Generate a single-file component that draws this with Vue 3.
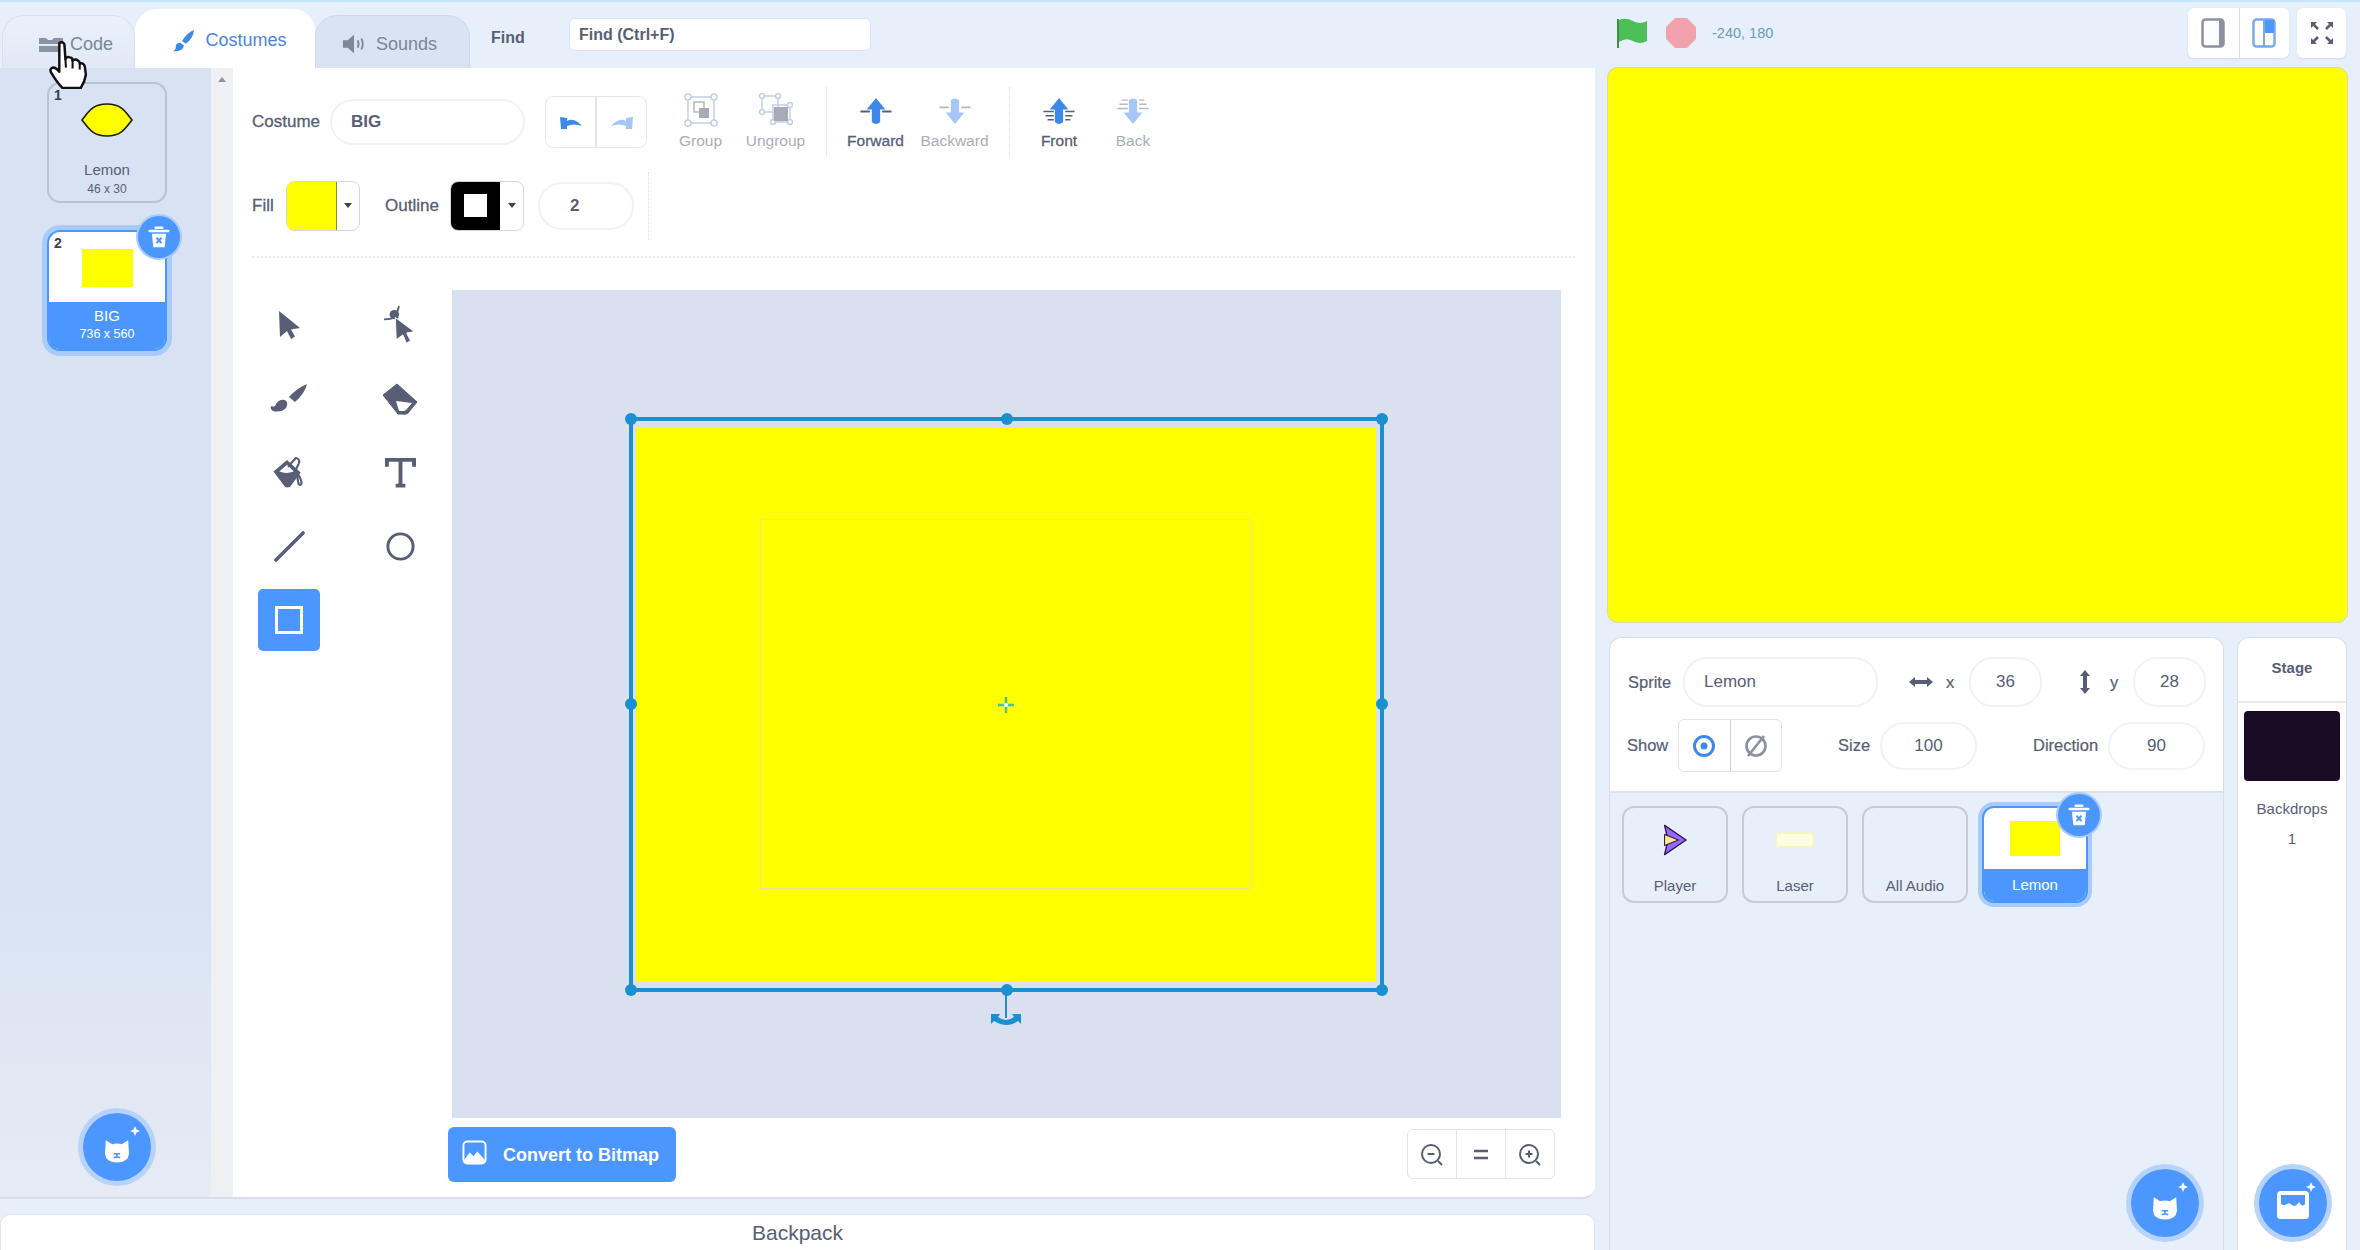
<template>
  <div class="app">
    <svg class="defs" width="0" height="0">
      <symbol id="trash" viewBox="0 0 24 24">
        <path d="M9 3.500h6M3.500 6.500h17" stroke="#fff" stroke-width="2.400" stroke-linecap="round" fill="none" />
        <path d="M5.500 9h13l-1.200 12.500H6.700z" fill="#fff" />
        <path d="M9.700 12.700l4.600 4.800M14.300 12.700l-4.600 4.800" stroke="#4c97ff" stroke-width="1.800" />
      </symbol>
      <symbol id="cat" viewBox="0 0 40 40">
        <path d="M6 9l8 5q6-2 12 0l8-5 1 17q-1 11-15 11T5 26z" fill="#fff" />
        <path d="M16 26h8M20 26v3M16 31q4-2 8 0" stroke="#4c97ff" stroke-width="2" fill="none" />
      </symbol>
      <symbol id="arrow" viewBox="0 0 24 30">
        <path d="M2 1l21 17-9 1.500 4 7-4 2.500-4-8-7 6z" fill="#575e75" />
      </symbol>
      <symbol id="up" viewBox="0 0 32 27">
        <path d="M16 1l9 11h-5v12q-4 4-8 0V12H7z" fill="#3d89ea" />
      </symbol>
      <symbol id="down" viewBox="0 0 32 27">
        <path d="M16 26l-9-11h5V3q4-3 8 0v12h5z" fill="#a5c6f6" />
      </symbol>
    </svg>

    <div class="left">
      <div class="tabs">
        <div class="tab tab-code">
          <svg class="code-icon" viewBox="0 0 26 16"><path d="M1 1h7l2 2h4l2-2h9v6H1zM1 9h20v6H1z" fill="#8b93a6" /></svg>
          <span>Code</span>
        </div>
        <div class="tab tab-active">
          <svg class="tab-icon" viewBox="0 0 26 26"><path d="M25 1q-1 9-9 15l-4-3Q17 4 25 1zM10 15l4 3q-1 7-12 6 4-2 3-5 1-4 5-4z" fill="#3d89ea" /></svg>
          <span>Costumes</span>
        </div>
        <div class="tab tab-sounds">
          <svg class="tab-icon" viewBox="0 0 26 26"><path d="M1 9h5l7-6v20l-7-6H1z" fill="#7e8799" /><path d="M17 9q2 4 0 8M21 7q3 6 0 12" stroke="#7e8799" stroke-width="2" fill="none" /></svg>
          <span>Sounds</span>
        </div>
        <span class="find-label">Find</span>
        <div class="find-input">Find (Ctrl+F)</div>
      </div>

      <div class="editor">
        <aside class="sidebar">
          <div class="costume-list">
            <div class="costume">
              <b class="costume-num">1</b>
              <svg class="costume-thumb" viewBox="0 0 52 36"><path d="M1 18C8 9 12 2 26 2s18 7 25 16c-7 9-11 16-25 16S8 27 1 18z" fill="#ff0" stroke="#1c1c10" stroke-width="1.600" /></svg>
              <span class="costume-name">Lemon</span>
              <span class="costume-size">46 x 30</span>
            </div>
            <div class="costume costume-selected">
              <b class="costume-num">2</b>
              <div class="costume-rect"></div>
              <div class="costume-foot">
                <span class="costume-name">BIG</span>
                <span class="costume-size">736 x 560</span>
              </div>
              <div class="trash-btn"><svg viewBox="0 0 24 24"><use href="#trash" /></svg></div>
            </div>
          </div>
          <div class="scroll-strip"><i></i></div>
          <div class="fab fab-side">
            <svg class="fab-cat" viewBox="0 0 40 40"><use href="#cat" /></svg>
            <i class="spark"></i>
          </div>
        </aside>

        <section class="paint">
          <div class="row-top">
            <span class="label label-costume">Costume</span>
            <div class="pill pill-name">BIG</div>
            <div class="undo-group">
              <div class="undo-btn undo-on">
                <svg viewBox="0 0 24 16"><path d="M1 3l7 1v3q7-4 15 5-8-3-15 0v3H2z" fill="#3d89ea" /></svg>
              </div>
              <div class="undo-btn">
                <svg viewBox="0 0 24 16"><path d="M23 3l-7 1v3Q9 3 1 12q8-3 15 0v3h6z" fill="#a5c6f6" /></svg>
              </div>
            </div>

            <div class="act act-group act-first dim">
              <svg viewBox="0 0 34 34" class="act-icon">
                <rect x="4" y="4" width="26" height="26" fill="none" stroke="#c3cfe6" stroke-width="1.500" />
                <g fill="#fff" stroke="#c3cfe6" stroke-width="1.500"><circle cx="4" cy="4" r="3" /><circle cx="30" cy="4" r="3" /><circle cx="4" cy="30" r="3" /><circle cx="30" cy="30" r="3" /></g>
                <rect x="10" y="9" width="10" height="10" fill="none" stroke="#b3b8c4" stroke-width="1.500" />
                <rect x="15" y="15" width="10" height="10" fill="#a7abb6" />
              </svg>
              <span>Group</span>
            </div>
            <div class="act act-group dim">
              <svg viewBox="0 0 34 34" class="act-icon">
                <rect x="3" y="3" width="16" height="16" fill="none" stroke="#c3cfe6" stroke-width="1.500" />
                <rect x="14" y="12" width="17" height="17" fill="none" stroke="#c3cfe6" stroke-width="1.500" />
                <g fill="#fff" stroke="#c3cfe6" stroke-width="1.500"><circle cx="3" cy="3" r="2.500" /><circle cx="19" cy="3" r="2.500" /><circle cx="3" cy="19" r="2.500" /><circle cx="31" cy="12" r="2.500" /><circle cx="14" cy="29" r="2.500" /><circle cx="31" cy="29" r="2.500" /></g>
                <rect x="15" y="14" width="14" height="14" fill="#a7abb6" />
              </svg>
              <span>Ungroup</span>
            </div>
            <i class="v-dots v-dots-a"></i>
            <div class="act act-forward">
              <svg viewBox="0 0 32 27" class="act-icon act-order">
                <path d="M1 14h9M22 14h9" stroke="#575e75" stroke-width="1.800" />
                <use href="#up" />
              </svg>
              <span>Forward</span>
            </div>
            <div class="act act-forward dim">
              <svg viewBox="0 0 32 27" class="act-icon act-order">
                <path d="M1 10h9M22 10h9" stroke="#b4b8c2" stroke-width="1.800" />
                <use href="#down" />
              </svg>
              <span>Backward</span>
            </div>
            <i class="v-dots v-dots-b"></i>
            <div class="act act-front">
              <svg viewBox="0 0 32 27" class="act-icon act-order">
                <path d="M1 14h10M22 14h9M3 18h8M22 18h7M5 22h6M22 22h5" stroke="#575e75" stroke-width="1.400" />
                <use href="#up" />
              </svg>
              <span>Front</span>
            </div>
            <div class="act act-front dim">
              <svg viewBox="0 0 32 27" class="act-icon act-order">
                <path d="M1 11h10M22 11h9M3 7h8M22 7h7M5 3h6M22 3h5" stroke="#b4b8c2" stroke-width="1.400" />
                <use href="#down" />
              </svg>
              <span>Back</span>
            </div>
          </div>

          <div class="row-fill">
            <span class="label label-fill">Fill</span>
            <div class="swatch">
              <div class="swatch-color swatch-yellow"></div>
              <div class="swatch-caret"><i></i></div>
            </div>
            <span class="label label-outline">Outline</span>
            <div class="swatch">
              <div class="swatch-color swatch-black"><i></i></div>
              <div class="swatch-caret"><i></i></div>
            </div>
            <div class="pill pill-stroke">2</div>
            <i class="v-dots v-dots-c"></i>
          </div>
          <div class="h-dots"></div>

          <div class="workspace">
            <div class="tools">
              <div class="tool">
                <svg viewBox="0 0 24 30" class="tool-icon tool-arrow"><use href="#arrow" /></svg>
              </div>
              <div class="tool">
                <svg viewBox="0 0 36 42" class="tool-icon tool-reshape">
                  <path d="M1 15q8 0 10-2 3-1 5 1M17 1l-3 9" stroke="#575e75" stroke-width="2" fill="none" />
                  <circle cx="12" cy="10" r="5" fill="#575e75" />
                  <path d="M13 13l20 15-8 1.500 4 8-4 3-4-9-7 5z" fill="#575e75" stroke="#fff" stroke-width="1" />
                </svg>
              </div>
              <div class="tool">
                <svg viewBox="0 0 38 32" class="tool-icon tool-brush">
                  <path d="M37 1q-2 9-12 18l-6-5Q27 5 37 1zM11 17q4-1 6 2 1 3-1 6-5 5-13 3-3-2-2-5 2 1 4 0 2-5 6-6z" fill="#575e75" />
                </svg>
              </div>
              <div class="tool">
                <svg viewBox="0 0 36 32" class="tool-icon tool-eraser">
                  <path d="M1 12L15 1l20 18-9 11q-2 2-6 1h-4z" fill="#575e75" stroke="#575e75" stroke-linejoin="round" />
                  <path d="M14 18l16 2-6 7q-1 1-4 1h-3z" fill="#fff" />
                </svg>
              </div>
              <div class="tool">
                <svg viewBox="0 0 36 34" class="tool-icon tool-fill">
                  <path d="M2 16L16 4l14 13-11 15q-3 1-5 0z" fill="#575e75" />
                  <path d="M8 16l8-7 7 7q-8 3-15 0z" fill="#fff" />
                  <path d="M17 11l8-9q5 1 3 6l-4 8q6 4 7 12-1 3-3 1l-2-10" fill="none" stroke="#575e75" stroke-width="2.200" />
                </svg>
              </div>
              <div class="tool">
                <svg viewBox="0 0 32 32" class="tool-icon tool-text">
                  <path d="M2 10V3h28v7M16 3v27M11 29.500h10" fill="none" stroke="#575e75" stroke-width="4" />
                </svg>
              </div>
              <div class="tool">
                <svg viewBox="0 0 32 32" class="tool-icon tool-line"><path d="M2 30L30 2" stroke="#575e75" stroke-width="3.600" stroke-linecap="round" /></svg>
              </div>
              <div class="tool">
                <svg viewBox="0 0 32 32" class="tool-icon tool-circle"><circle cx="16" cy="16" r="13" fill="none" stroke="#575e75" stroke-width="3" /></svg>
              </div>
              <div class="tool tool-active"><i></i></div>
            </div>

            <div class="canvas">
              <div class="art">
                <div class="art-inner"></div>
              </div>
              <div class="selection">
                <i v-for="h in handles" :key="h.id" class="handle" :class="h.id"></i>
              </div>
              <i class="rotate-line"></i>
              <svg class="rotate-icon" viewBox="0 0 30 13">
                <path d="M0 1h9l-2 3q8 6 16 0l-2-3h9v10l-3-3q-11 8-24 0l-3 3z" fill="#1a90d2" />
              </svg>
              <svg class="cross" viewBox="0 0 18 18"><path d="M9 1v16M1 9h16" stroke="#4dbf9f" stroke-width="2.400" /><circle cx="9" cy="9" r="2" fill="#fff" /></svg>
            </div>
          </div>

          <div class="paint-foot">
            <div class="convert">
              <svg viewBox="0 0 26 26"><rect x="1.500" y="1.500" width="23" height="23" rx="4" fill="none" stroke="#fff" stroke-width="2" /><path d="M2 21l6-8 4 4 4-5 8 9v3H2z" fill="#fff" /></svg>
              <span>Convert to Bitmap</span>
            </div>
            <div class="zoom-group">
              <div class="zoom-btn">
                <svg viewBox="0 0 24 24"><circle cx="11" cy="11" r="9" fill="none" stroke="#575e75" stroke-width="2" /><path d="M7.500 11h7M18 18l4 4" stroke="#575e75" stroke-width="2" /></svg>
              </div>
              <div class="zoom-btn">
                <svg viewBox="0 0 24 24"><path d="M5 8h14M5 15h14" stroke="#575e75" stroke-width="2.600" /></svg>
              </div>
              <div class="zoom-btn">
                <svg viewBox="0 0 24 24"><circle cx="11" cy="11" r="9" fill="none" stroke="#575e75" stroke-width="2" /><path d="M7.500 11h7M11 7.500v7M18 18l4 4" stroke="#575e75" stroke-width="2" /></svg>
              </div>
            </div>
          </div>
        </section>
      </div>

      <div class="backpack">Backpack</div>
    </div>

    <div class="right">
      <div class="stage-bar">
        <svg class="flag" viewBox="0 0 32 32"><path d="M2 31V2" stroke="#3f8f45" stroke-width="2" /><path d="M3 3q7-3 14 1t14 0v20q-7 4-14 0t-14 1z" fill="#4cbf56" /></svg>
        <svg class="stop" viewBox="0 0 32 32"><path d="M10 1h12l9 9v12l-9 9H10l-9-9V10z" fill="#f1a2ac" /></svg>
        <span class="coords">-240, 180</span>
        <div class="view-group">
          <div class="view-btn">
            <svg viewBox="0 0 24 30"><rect x="1.500" y="1.500" width="21" height="27" rx="3" fill="none" stroke="#8b91a0" stroke-width="2.500" /><rect x="18" y="2" width="4" height="26" fill="#8b91a0" /></svg>
          </div>
          <div class="view-btn">
            <svg viewBox="0 0 24 30"><rect x="1.500" y="1.500" width="21" height="27" rx="3" fill="#fff" stroke="#7ba8ee" stroke-width="2.500" /><rect x="13" y="2" width="9" height="13" fill="#4c97ff" /><path d="M12 2v26" stroke="#7ba8ee" stroke-width="2" /></svg>
          </div>
        </div>
        <div class="view-btn view-single">
          <svg viewBox="0 0 24 24"><path d="M2 2l6 6M22 2l-6 6M2 22l6-6M22 22l-6-6" stroke="#575e75" stroke-width="2.600" /><path d="M1 1h6L1 7zM23 1h-6l6 6zM1 23h6l-6-6zM23 23h-6l6-6z" fill="#575e75" /></svg>
        </div>
      </div>

      <div class="stage"></div>

      <div class="lower">
        <div class="sprite-panel">
          <div class="sprite-info">
            <div class="info-row">
              <span class="info-label info-sprite">Sprite</span>
              <div class="pill pill-sprite">Lemon</div>
              <svg class="xy-icon xy-h" viewBox="0 0 26 12"><path d="M1 6l6-5v3h12V1l6 5-6 5V8H7v3z" fill="#575e75" /></svg>
              <span class="info-label info-x">x</span>
              <div class="pill pill-xy">36</div>
              <svg class="xy-icon xy-v" viewBox="0 0 12 26"><path d="M6 1l5 6H8v12h3l-5 6-5-6h3V7H1z" fill="#575e75" /></svg>
              <span class="info-label info-y">y</span>
              <div class="pill pill-xy">28</div>
            </div>
            <div class="info-row info-row-2">
              <span class="info-label info-show">Show</span>
              <div class="show-group">
                <div class="show-btn">
                  <svg viewBox="0 0 24 24"><circle cx="12" cy="12" r="9.500" fill="none" stroke="#3d89ea" stroke-width="3" /><circle cx="12" cy="12" r="3.500" fill="#3d89ea" /></svg>
                </div>
                <div class="show-btn">
                  <svg viewBox="0 0 24 24"><circle cx="12" cy="12" r="9.500" fill="none" stroke="#8a90a0" stroke-width="2.600" /><path d="M4 22L20 2" stroke="#8a90a0" stroke-width="2.600" /></svg>
                </div>
              </div>
              <span class="info-label info-size">Size</span>
              <div class="pill pill-size">100</div>
              <span class="info-label info-dir">Direction</span>
              <div class="pill pill-dir">90</div>
            </div>
          </div>
          <div class="sprite-list">
            <div class="sprite-card">
              <svg class="sprite-thumb" viewBox="0 0 36 46">
                <path d="M3 2l31 21L3 44l5-21z" fill="#9966ff" stroke="#2a1a50" stroke-width="2" stroke-linejoin="round" />
                <path d="M3 15l20 8-20 8z" fill="#f7ec8e" stroke="#2a1a50" stroke-width="1.500" />
              </svg>
              <span>Player</span>
            </div>
            <div class="sprite-card">
              <div class="laser"></div>
              <span>Laser</span>
            </div>
            <div class="sprite-card">
              <span>All Audio</span>
            </div>
            <div class="sprite-card sprite-selected">
              <div class="sprite-rect"></div>
              <span>Lemon</span>
              <div class="trash-btn trash-sprite"><svg viewBox="0 0 24 24"><use href="#trash" /></svg></div>
            </div>
          </div>
          <div class="fab fab-sprite">
            <svg class="fab-cat" viewBox="0 0 40 40"><use href="#cat" /></svg>
            <i class="spark"></i>
          </div>
        </div>

        <div class="stage-panel">
          <div class="stage-head">Stage</div>
          <div class="backdrop-thumb"></div>
          <div class="backdrop-label">Backdrops</div>
          <div class="backdrop-count">1</div>
          <div class="fab fab-stage">
            <svg class="fab-cat" viewBox="0 0 34 30"><path d="M1 5q0-4 4-4h24q4 0 4 4v21q0 3-4 3H5q-4 0-4-3z" fill="#fff" /><path d="M5 5h24v9q-3 4-6-2-4 6-7 3-3-3-5-1-3 2-6 0z" fill="#4c97ff" /></svg>
            <i class="spark"></i>
          </div>
        </div>
      </div>
    </div>

    <svg class="hand" viewBox="0 0 38 48">
      <path d="M10 3q3-2 5 1l1 15q1-3 4-2 3 0 3 3 3-2 5 0 2 1 2 3 4-1 5 3l1 8q-1 7-5 13H13q-5-5-11-15-2-4 2-5 3 0 6 4z" fill="#fff" stroke="#111" stroke-width="2.400" stroke-linejoin="round" />
      <path d="M16 19l.5 8M23 20v8M30 23v6" stroke="#111" stroke-width="2" fill="none" />
    </svg>
  </div>
</template>

<script setup>
const handles = [
  { id: 'tl' }, { id: 'tc' }, { id: 'tr' },
  { id: 'ml' }, { id: 'mr' },
  { id: 'bl' }, { id: 'bc' }, { id: 'br' }
];
</script>

<style>
body {
  margin: 0;
  background: #e9f1fc;
}
</style>

<style scoped>
.defs {
  position: absolute;
}

.app {
  position: relative;
  display: flex;
  box-sizing: border-box;
  width: 2360px;
  height: 1250px;
  overflow: hidden;
  border-top: 2px solid #c4e6fb;
  background: #e7effb;
  font-family: "Liberation Sans", Arial, sans-serif;
  font-size: 16px;
  color: #575e75;
}

.left {
  display: flex;
  flex-direction: column;
  width: 1595px;
}

/* tabs */
.tabs {
  display: flex;
  align-items: flex-end;
  height: 66px;
  padding-left: 2px;
}

.tab {
  display: flex;
  align-items: center;
  justify-content: center;
  box-sizing: border-box;
  height: 53px;
  padding-top: 5px;
  border-radius: 22px 22px 0 0;
  font-size: 18px;
  color: #7c8598;
}

.tab-code {
  position: relative;
  width: 133px;
  padding-left: 46px;
  background: linear-gradient(#eaf1fc, #e1e9f6);
  border: 1px solid #d8e0ee;
  border-bottom: none;
}

.code-icon {
  position: absolute;
  left: 35px;
  top: 21px;
  width: 26px;
  height: 16px;
}

.tab-active {
  width: 180px;
  height: 59px;
  gap: 10px;
  padding-left: 8px;
  background: #fff;
  color: #4c85d8;
}

.tab-sounds {
  width: 155px;
  gap: 10px;
  padding-right: 6px;
  background: #d9e3f2;
  border: 1px solid #cfd8e8;
  border-bottom: none;
}

.tab-icon {
  width: 24px;
  height: 24px;
}

.find-label {
  align-self: center;
  width: 78px;
  margin-left: 21px;
  padding-top: 6px;
  font-size: 16px;
  font-weight: bold;
}

.find-input {
  align-self: center;
  box-sizing: border-box;
  width: 302px;
  height: 33px;
  margin-top: -1px;
  padding: 0 9px;
  border: 1px solid #dfe5f0;
  border-radius: 6px;
  background: #fff;
  font-size: 16px;
  font-weight: bold;
  line-height: 31px;
}

/* editor */
.editor {
  display: flex;
  box-sizing: border-box;
  height: 1132px;
  border-bottom: 2px solid #d8dfeb;
  border-radius: 0 0 12px 0;
  background: #fff;
}

.sidebar {
  position: relative;
  flex: none;
  width: 233px;
  background: linear-gradient(#d8e2f3 0%, #d8e2f3 70%, #e6ebf4 100%);
}

.costume-list {
  display: flex;
  flex-direction: column;
  gap: 27px;
  padding: 14px 0 0 47px;
}

.costume {
  position: relative;
  display: flex;
  flex-direction: column;
  align-items: center;
  box-sizing: border-box;
  width: 120px;
  height: 121px;
  border: 2px solid #b9c2d2;
  border-radius: 13px;
}

.costume-num {
  position: absolute;
  left: 5px;
  top: 3px;
  font-size: 14px;
  color: #3b3f4a;
}

.costume-thumb {
  width: 52px;
  height: 36px;
  margin-top: 18px;
}

.costume-name {
  margin-top: 23px;
  font-size: 15px;
  line-height: 18px;
}

.costume-size {
  margin-top: 4px;
  font-size: 12px;
  line-height: 13px;
}

.costume-selected {
  border: 2px solid #4c97ff;
  background: #fff;
  box-shadow: 0 0 0 5px #a9cbfb;
}

.costume-rect {
  width: 51px;
  height: 39px;
  margin-top: 17px;
  background: #ffff00;
}

.costume-foot {
  display: flex;
  flex-direction: column;
  align-items: center;
  width: 100%;
  height: 47px;
  margin-top: 15px;
  border-radius: 0 0 10px 10px;
  background: #4c97ff;
  color: #fff;
}

.costume-foot .costume-name {
  margin-top: 5px;
}

.costume-foot .costume-size {
  margin-top: 3px;
  font-size: 12.500px;
}

.trash-btn {
  position: absolute;
  top: -16px;
  right: -15px;
  display: flex;
  align-items: center;
  justify-content: center;
  width: 42px;
  height: 42px;
  border-radius: 50%;
  background: #4c97ff;
  box-shadow: 0 0 0 2px #a9cbfb;
}

.trash-btn svg {
  width: 26px;
  height: 26px;
}

.scroll-strip {
  position: absolute;
  top: 0;
  right: 0;
  bottom: 0;
  width: 22px;
  background: #eef0f3;
}

.scroll-strip i {
  position: absolute;
  top: 9px;
  left: 7px;
  border: 4px solid transparent;
  border-top: none;
  border-bottom: 5px solid #8d93a0;
}

.fab {
  position: absolute;
  display: flex;
  align-items: center;
  justify-content: center;
  width: 68px;
  height: 68px;
  border-radius: 50%;
  background: #4c97ff;
  box-shadow: 0 0 0 5px #b7d3fb;
}

.fab-cat {
  width: 32px;
  height: 32px;
  margin-top: 5px;
}

.spark {
  position: absolute;
  top: 13px;
  right: 11px;
  width: 10px;
  height: 10px;
  background: #fff;
  clip-path: polygon(50% 0, 65% 35%, 100% 50%, 65% 65%, 50% 100%, 35% 65%, 0 50%, 35% 35%);
}

.fab-side {
  left: 83px;
  top: 1045px;
}

/* paint area */
.paint {
  flex: 1;
  display: flex;
  flex-direction: column;
  min-width: 0;
  padding: 0 20px 0 19px;
}

.label {
  font-size: 17px;
  -webkit-text-stroke: 0.3px #575e75;
  color: #575e75;
}

.row-top {
  display: flex;
  align-items: center;
  height: 70px;
  margin-top: 19px;
}

.label-costume {
  width: 78px;
}

.pill {
  display: flex;
  align-items: center;
  box-sizing: border-box;
  border: 2px solid #f0f2f6;
  border-radius: 24px;
  background: #fff;
  font-size: 17px;
  color: #575e75;
}

.pill-name {
  width: 195px;
  height: 46px;
  padding-left: 19px;
  font-weight: bold;
}

.undo-group {
  display: flex;
  height: 50px;
  margin-left: 20px;
  border: 1px solid #e3e7ef;
  border-radius: 8px;
}

.undo-btn {
  display: flex;
  align-items: center;
  justify-content: center;
  width: 49px;
}

.undo-on {
  border-right: 2px solid #dfe3ea;
}

.undo-btn svg {
  width: 24px;
  height: 16px;
}

.act {
  display: flex;
  flex-direction: column;
  align-items: center;
  font-size: 15.500px;
  -webkit-text-stroke: 0.3px #575e75;
  color: #575e75;
  white-space: nowrap;
}

.act.dim {
  -webkit-text-stroke: 0;
  color: #a9adb7;
}

.act-group {
  width: 75px;
}

.act-first {
  margin-left: 16px;
}

.act-forward {
  width: 79px;
}

.act-front {
  width: 74px;
}

.act-icon {
  width: 34px;
  height: 34px;
  margin-bottom: 5px;
}

.act-order {
  height: 28px;
  margin-top: 4px;
  margin-bottom: 7px;
}

.v-dots {
  border-left: 1px dotted #d9dde5;
}

.v-dots-a {
  height: 70px;
  margin: 0 9px 0 13px;
}

.v-dots-b {
  height: 70px;
  margin: 0 12px 0 15px;
}

.row-fill {
  display: flex;
  align-items: center;
  height: 68px;
  margin-top: 15px;
}

.label-fill {
  width: 34px;
}

.label-outline {
  width: 65px;
  margin-left: 25px;
}

.swatch {
  display: flex;
  box-sizing: border-box;
  width: 74px;
  height: 50px;
  border: 1px solid #d3d7df;
  border-radius: 8px;
  overflow: hidden;
  background: #fff;
}

.swatch-color {
  display: flex;
  align-items: center;
  justify-content: center;
  width: 49px;
}

.swatch-yellow {
  border-right: 1px solid #8e8e2a;
  background: #ffff00;
}

.swatch-black {
  background: #000;
}

.swatch-black i {
  width: 23px;
  height: 23px;
  background: #fff;
}

.swatch-caret {
  flex: 1;
  display: flex;
  align-items: center;
  justify-content: center;
}

.swatch-caret i {
  border: 4px solid transparent;
  border-bottom: none;
  border-top: 5px solid #444;
}

.pill-stroke {
  width: 96px;
  height: 48px;
  margin-left: 14px;
  padding-left: 30px;
  font-weight: bold;
}

.v-dots-c {
  height: 68px;
  margin-left: 14px;
}

.h-dots {
  margin-top: 16px;
  border-top: 2px dotted #e6e8ee;
}

.workspace {
  display: flex;
  margin-top: 32px;
}

.tools {
  flex: none;
  display: grid;
  grid-template-columns: 62px 62px;
  grid-auto-rows: 62px;
  column-gap: 49px;
  row-gap: 11.800px;
  align-content: start;
  box-sizing: border-box;
  width: 200px;
  padding: 4px 0 0 6px;
}

.tool {
  display: flex;
  align-items: center;
  justify-content: center;
}

.tool-arrow {
  width: 24px;
  height: 30px;
}

.tool-reshape {
  width: 34px;
  height: 40px;
}

.tool-brush {
  width: 38px;
  height: 32px;
}

.tool-eraser {
  width: 36px;
  height: 32px;
}

.tool-fill {
  width: 36px;
  height: 33px;
}

.tool-text,
.tool-line,
.tool-circle {
  width: 31px;
  height: 31px;
}

.tool-active {
  border-radius: 5px;
  background: #4c97ff;
}

.tool-active i {
  box-sizing: border-box;
  width: 28px;
  height: 28px;
  border: 3px solid #fff;
}

.canvas {
  position: relative;
  flex: none;
  display: flex;
  align-items: center;
  justify-content: center;
  width: 1109px;
  height: 828px;
  background: #d9e0f0;
}

.art {
  display: flex;
  align-items: center;
  justify-content: center;
  width: 740px;
  height: 555px;
  margin: 1px 0 0 -1px;
  background: #ffff00;
}

.art-inner {
  box-sizing: border-box;
  width: 492px;
  height: 370px;
  border: 1px solid #e8e88a;
}

.selection {
  position: absolute;
  left: 179px;
  top: 129px;
  width: 751px;
  height: 571px;
  box-shadow: 0 0 0 2px #1a90d2, inset 0 0 0 2px #1a90d2;
}

.handle {
  position: absolute;
  width: 12px;
  height: 12px;
  margin: -6px 0 0 -6px;
  border-radius: 50%;
  background: #1a90d2;
}

.tl { left: 0; top: 0; }
.tc { left: 50%; top: 0; }
.tr { left: 100%; top: 0; }
.ml { left: 0; top: 50%; }
.mr { left: 100%; top: 50%; }
.bl { left: 0; top: 100%; }
.bc { left: 50%; top: 100%; }
.br { left: 100%; top: 100%; }

.rotate-line {
  position: absolute;
  left: 553px;
  top: 700px;
  width: 2px;
  height: 28px;
  background: #1a90d2;
}

.rotate-icon {
  position: absolute;
  left: 539px;
  top: 723px;
  width: 30px;
  height: 13px;
}

.cross {
  position: absolute;
  left: 545px;
  top: 406px;
  width: 18px;
  height: 18px;
}

.paint-foot {
  display: flex;
  align-items: flex-start;
  margin-top: 9px;
  padding-left: 196px;
}

.convert {
  display: flex;
  align-items: center;
  gap: 16px;
  box-sizing: border-box;
  width: 228px;
  height: 55px;
  padding: 3px 0 0 14px;
  border-radius: 6px;
  background: #4c97ff;
  font-size: 18px;
  font-weight: bold;
  color: #fff;
}

.convert svg {
  width: 25px;
  height: 25px;
  margin-top: -7px;
}

.zoom-group {
  display: flex;
  box-sizing: border-box;
  height: 50px;
  margin: 2px 20px 0 auto;
  border: 1px solid #dfe3ea;
  border-radius: 6px;
}

.zoom-btn {
  display: flex;
  align-items: center;
  justify-content: center;
  width: 48px;
}

.zoom-btn + .zoom-btn {
  border-left: 1px solid #dfe3ea;
}

.zoom-btn svg {
  width: 24px;
  height: 24px;
  margin-top: 2px;
}

.backpack {
  flex: 1;
  margin-top: 15px;
  border: 1px solid #dfe5ef;
  border-bottom: none;
  border-radius: 10px 10px 0 0;
  background: #fff;
  font-size: 21px;
  line-height: 35px;
  text-align: center;
  color: #575e75;
}

/* right side */
.right {
  display: flex;
  flex-direction: column;
  width: 739px;
  margin-left: 13px;
}

.stage-bar {
  display: flex;
  align-items: center;
  box-sizing: border-box;
  height: 66px;
  padding-bottom: 4px;
}

.flag {
  width: 32px;
  height: 32px;
  margin-left: 8px;
}

.stop {
  width: 32px;
  height: 32px;
  margin-left: 17px;
}

.coords {
  margin-left: 15px;
  font-size: 14.500px;
  color: #6b9cbd;
}

.view-group {
  display: flex;
  margin-left: auto;
  border-radius: 6px;
  background: #fff;
  box-shadow: 0 1px 2px #d5dbe6;
}

.view-btn {
  display: flex;
  align-items: center;
  justify-content: center;
  box-sizing: border-box;
  width: 50.500px;
  height: 50px;
}

.view-btn + .view-btn {
  border-left: 1px solid #d9dde5;
}

.view-btn svg {
  width: 24px;
  height: 30px;
}

.view-single {
  width: 49px;
  margin: 0 1px 0 8px;
  border-radius: 6px;
  background: #fff;
  box-shadow: 0 1px 2px #d5dbe6;
}

.view-single svg {
  width: 24px;
  height: 24px;
}

.stage {
  height: 554px;
  border-radius: 10px;
  background: #ffff00;
  box-shadow: 0 0 0 1px #dcdcaa;
}

.lower {
  display: flex;
  flex: 1;
  margin-top: 15px;
}

.sprite-panel {
  position: relative;
  box-sizing: border-box;
  width: 615px;
  margin-left: 1px;
  border: 1px solid #d7dde8;
  border-bottom: none;
  border-radius: 12px 12px 0 0;
}

.sprite-info {
  box-sizing: border-box;
  height: 155px;
  padding: 19px 0 0 18px;
  border-bottom: 2px solid #dde2eb;
  border-radius: 12px 12px 0 0;
  background: #fff;
}

.info-label {
  font-size: 16.500px;
  color: #575e75;
  -webkit-text-stroke: 0.2px #575e75;
}

.info-row {
  display: flex;
  align-items: center;
  height: 50px;
}

.info-row-2 {
  height: 53px;
  margin-top: 12px;
}

.info-sprite {
  width: 55px;
}

.pill-sprite {
  width: 195px;
  height: 50px;
  padding-left: 19px;
}

.xy-icon {
  flex: none;
}

.xy-h {
  width: 26px;
  height: 12px;
  margin-left: 30px;
}

.info-x {
  width: 23px;
  margin-left: 12px;
}

.pill-xy {
  justify-content: center;
  width: 73px;
  height: 50px;
}

.xy-v {
  width: 12px;
  height: 26px;
  margin-left: 37px;
}

.info-y {
  width: 23px;
  margin-left: 19px;
}

.info-show {
  width: 51px;
  margin-left: -1px;
}

.show-group {
  display: flex;
  box-sizing: border-box;
  width: 104px;
  height: 53px;
  border: 1px solid #dfe3ea;
  border-radius: 6px;
}

.show-btn {
  flex: 1;
  display: flex;
  align-items: center;
  justify-content: center;
}

.show-btn + .show-btn {
  border-left: 1px solid #c9ced8;
}

.show-btn svg {
  width: 24px;
  height: 24px;
}

.info-size {
  width: 42px;
  margin-left: 56px;
}

.pill-size,
.pill-dir {
  justify-content: center;
  width: 97px;
  height: 48px;
}

.info-dir {
  width: 75px;
  margin-left: 56px;
}

.sprite-list {
  display: flex;
  gap: 14px;
  padding: 13px 0 0 12px;
}

.sprite-card {
  position: relative;
  display: flex;
  flex-direction: column;
  align-items: center;
  justify-content: flex-end;
  box-sizing: border-box;
  width: 106px;
  height: 97px;
  padding-bottom: 7px;
  border: 2px solid #c5ccd9;
  border-radius: 12px;
  font-size: 15px;
}

.sprite-thumb {
  position: absolute;
  top: 16px;
  width: 34px;
  height: 32px;
}

.laser {
  position: absolute;
  top: 26px;
  width: 36px;
  height: 12px;
  border-radius: 3px;
  background: #fdfde0;
  box-shadow: 0 0 0 2px #f4f5c4;
}

.sprite-selected {
  justify-content: flex-start;
  padding: 0;
  border-color: #4c97ff;
  background: #fff;
  box-shadow: 0 0 0 4px #a9cbfb;
}

.sprite-rect {
  width: 50px;
  height: 38px;
  margin-top: 13px;
  background: #ffff00;
}

.sprite-selected > span {
  align-self: stretch;
  height: 32px;
  margin-top: 13px;
  border-radius: 0 0 10px 10px;
  background: #4c97ff;
  color: #fff;
  line-height: 32px;
  text-align: center;
}

.trash-sprite {
  top: -14px;
  right: -14px;
}

.fab-sprite {
  left: 521px;
  top: 531px;
}

.stage-panel {
  position: relative;
  box-sizing: border-box;
  width: 110px;
  margin-left: 13px;
  border: 1px solid #d7dde8;
  border-bottom: none;
  border-radius: 12px 12px 0 0;
  background: #fff;
  font-size: 15px;
  text-align: center;
}

.stage-head {
  height: 63px;
  border-bottom: 2px solid #e6e9ef;
  font-weight: bold;
  line-height: 59px;
}

.backdrop-thumb {
  height: 70px;
  margin: 8px 6px 0;
  border-radius: 4px;
  background: #1a0b24;
}

.backdrop-label {
  margin-top: 19px;
}

.backdrop-count {
  margin-top: 13px;
}

.fab-stage {
  left: 21px;
  top: 531px;
}

.fab-stage .fab-cat {
  width: 34px;
  height: 30px;
  margin-top: 3px;
}

.hand {
  position: absolute;
  left: 49px;
  top: 38px;
  width: 39px;
  height: 49px;
}
</style>
